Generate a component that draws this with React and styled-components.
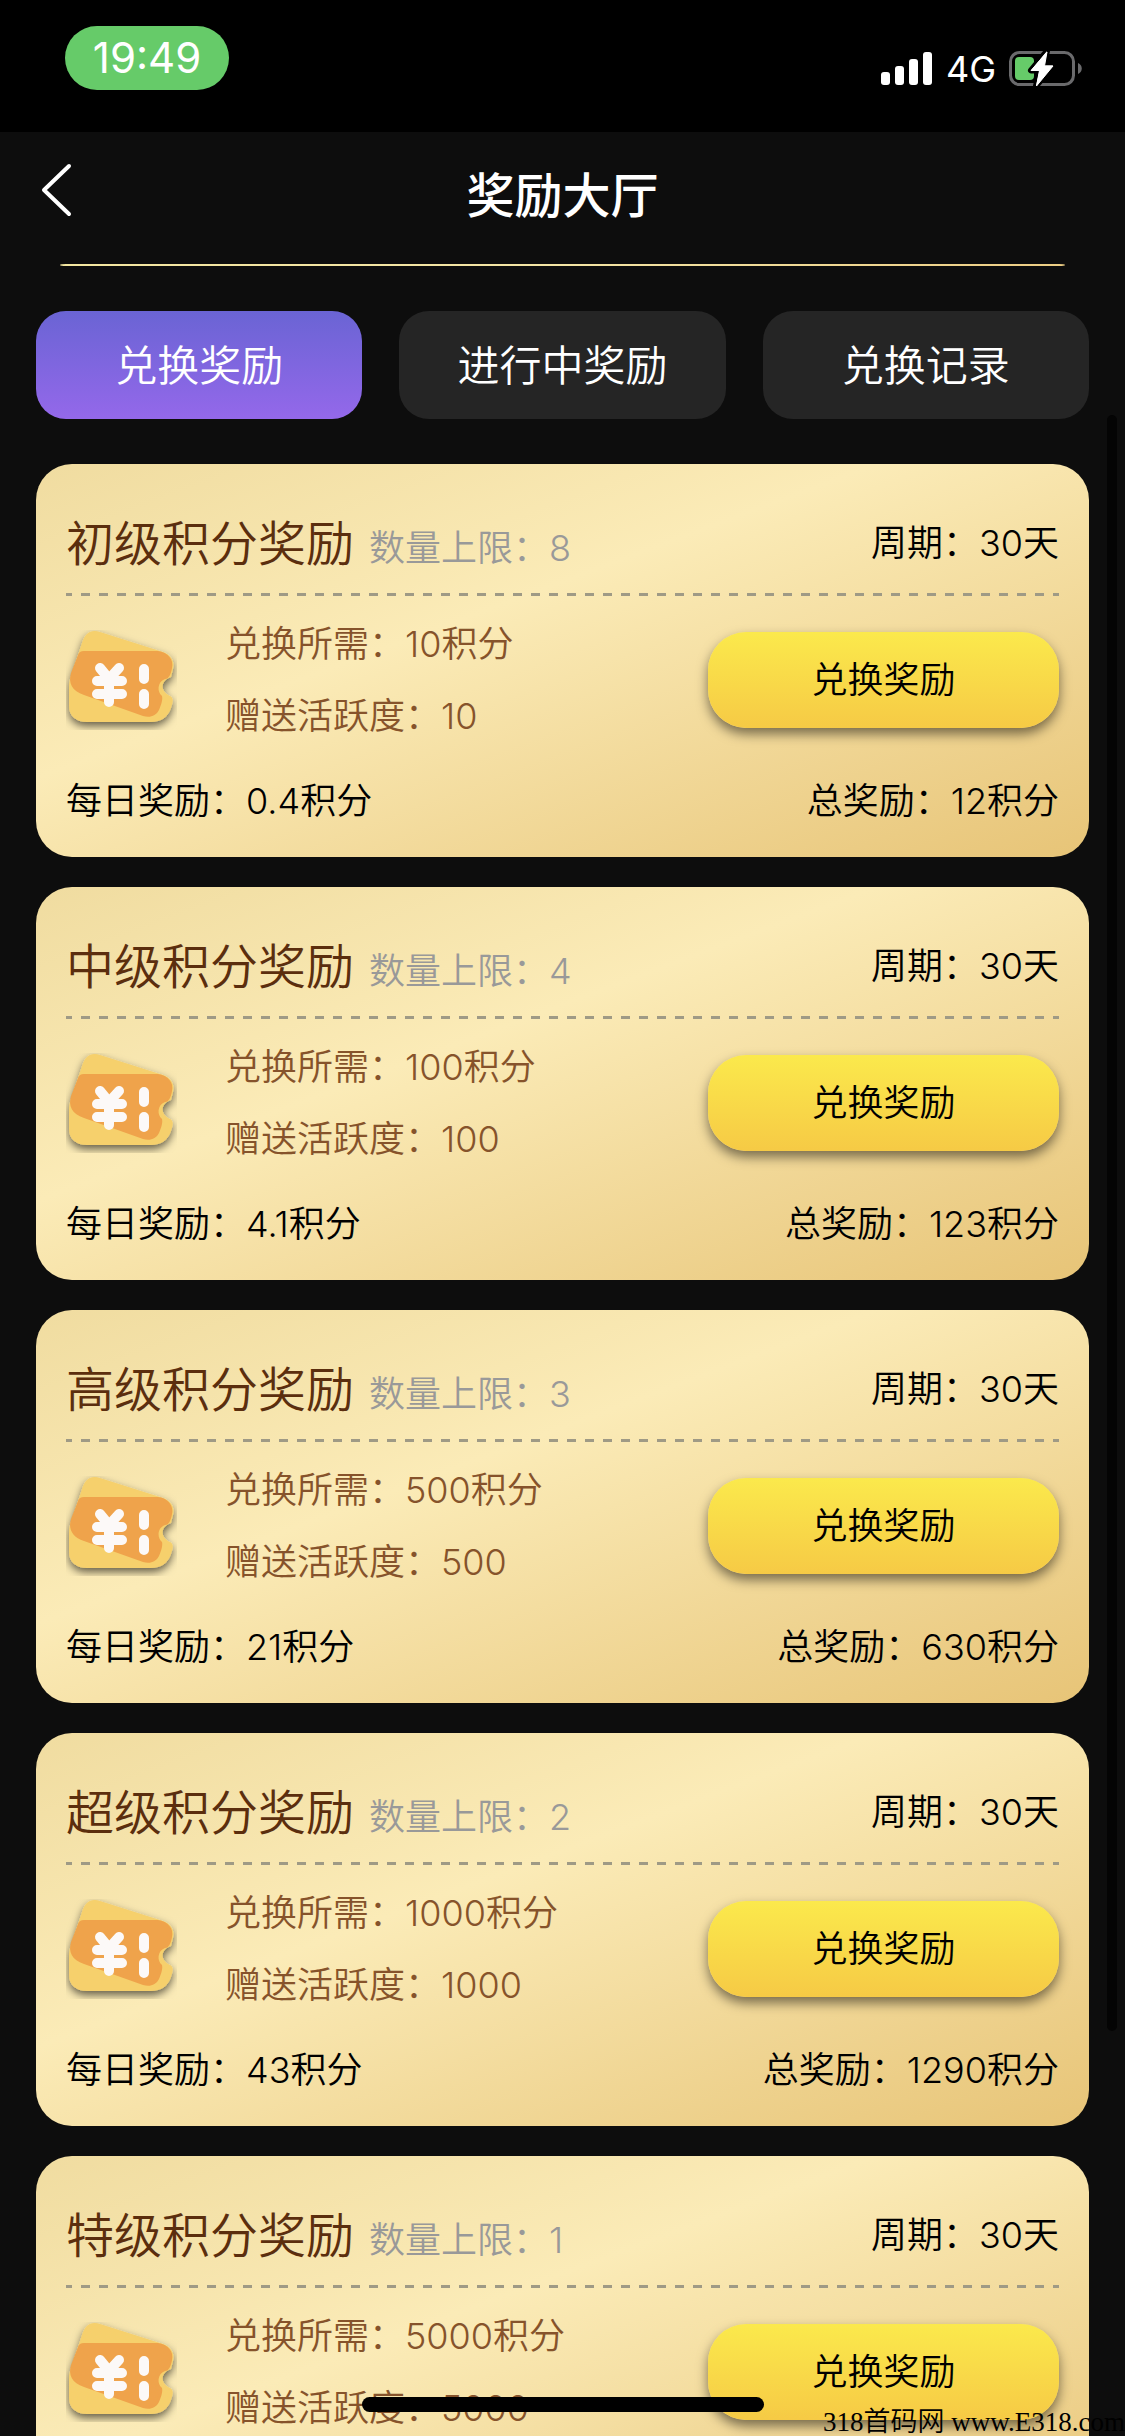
import React, { useState } from "react";
import styled, { createGlobalStyle } from "styled-components";

const GlobalStyle = createGlobalStyle`
  *, *::before, *::after { box-sizing: border-box; }
  html { height: 100%; }
  body {
    margin: 0;
    height: 100%;
    overflow: hidden;
    background: #0d0d0d;
    font-family: Inter, "Noto Sans CJK SC", sans-serif;
    font-size: 36px;
    font-weight: 350;
    color: #000;
  }
  #root { height: 100%; }
  button { font: inherit; border: 0; padding: 0; cursor: pointer; }
`;

const Screen = styled.div`
  height: 100%;
  display: flex;
  flex-direction: column;
  overflow: hidden;
  position: relative;
`;

const StatusBar = styled.div`
  flex: none;
  height: 132px;
  padding: 26px 43px 0 65px;
  display: flex;
  align-items: flex-start;
  justify-content: space-between;
  background: #000;
  color: #fff;
`;

const Clock = styled.time`
  width: 164px;
  height: 64px;
  border-radius: 32px;
  background: #66cb69;
  font-size: 42px;
  font-weight: 400;
  line-height: 64px;
  text-align: center;
`;

const StatusIcons = styled.div`
  height: 86px;
  display: flex;
  align-items: center;
  gap: 13px;
  font-size: 36px;
  font-weight: 400;
`;

const Header = styled.header`
  flex: none;
  height: 132px;
  padding: 0 36px 4px;
  display: grid;
  grid-template-columns: 1fr auto 1fr;
  align-items: center;
  color: #fff;
`;

const BackButton = styled.button`
  width: 48px;
  height: 60px;
  background: none;
  color: inherit;
  display: flex;
  align-items: center;
  margin-bottom: 12px;
`;

const Title = styled.h1`
  margin: 0;
  font-size: 48px;
  font-weight: 500;
  line-height: 72px;
`;

const GoldLine = styled.div`
  flex: none;
  height: 2px;
  margin: 0 60px;
  border-radius: 12px / 2px;
  background: linear-gradient(to right, #f3e6a0, #f3e4a4 50%, #eccd84);
`;

const Tabs = styled.nav`
  flex: none;
  display: grid;
  grid-template-columns: repeat(3, 1fr);
  gap: 37px;
  padding: 45px 36px;
`;

const Tab = styled.button`
  height: 108px;
  padding-bottom: 6px;
  border-radius: 30px;
  color: #fff;
  font-size: 42px;
  background: ${(p) =>
    p.$active ? "linear-gradient(#6a64d4, #9468ea)" : "#252525"};
`;

const List = styled.main`
  flex: 1;
  min-height: 0;
  overflow: hidden;
  display: flex;
  flex-direction: column;
  gap: 30px;
  padding: 0 36px;
`;

const Card = styled.section`
  flex: none;
  min-height: 393px;
  padding: 48px 30px 25px;
  border-radius: 36px;
  background: linear-gradient(
    to bottom right,
    #f0dca0,
    #fbebb7 40%,
    #e7c477
  );
`;

const CardHead = styled.div`
  display: flex;
  align-items: flex-start;
  justify-content: space-between;
  height: 60px;
`;

const Heading = styled.div`
  display: flex;
  align-items: baseline;
  gap: 15px;
`;

const Name = styled.h2`
  margin: 0;
  font-size: 48px;
  font-weight: 350;
  line-height: 64px;
  color: #5b2e0e;
`;

const Limit = styled.span`
  color: #999;
`;

const Period = styled.span`
  line-height: 62px;
`;

const Dashes = styled.hr`
  height: 3px;
  margin: 21px 0 0;
  border: 0;
  background: repeating-linear-gradient(
    to right,
    #9f9a85 0 6px,
    transparent 6px 15px,
    #9f9a85 15px 18px
  );
`;

const CardBody = styled.div`
  display: flex;
  align-items: center;
  height: 168px;
`;

const Terms = styled.div`
  flex: 1;
  margin-left: 48px;
  line-height: 72px;
  color: #86532b;
`;

const RedeemButton = styled.button`
  width: 351px;
  height: 96px;
  padding-bottom: 6px;
  border-radius: 38px;
  background: linear-gradient(#fbe94c, #f6ca45);
  box-shadow: 0 6px 12px rgba(0, 0, 0, 0.5);
  color: #000;
`;

const CardFoot = styled.div`
  display: flex;
  justify-content: space-between;
  padding-top: 6px;
  line-height: 62px;
`;

const ScrollThumb = styled.div`
  position: absolute;
  top: 415px;
  right: 8px;
  width: 10px;
  height: 1616px;
  border-radius: 5px;
  background: #040404;
`;

const HomeIndicator = styled.div`
  position: absolute;
  bottom: 24px;
  left: 50%;
  width: 402px;
  height: 15px;
  border-radius: 8px;
  transform: translateX(-50%);
  background: #000;
`;

const Watermark = styled.div`
  position: absolute;
  right: 0;
  bottom: 0;
  font-family: "Liberation Serif", "Noto Sans CJK SC", serif;
  font-size: 27px;
  line-height: 27px;
  white-space: nowrap;
`;

function SignalIcon() {
  return (
    <svg width="52" height="36" viewBox="0 0 52 36" fill="#fff" aria-hidden="true">
      <rect x="0" y="21" width="9" height="13" rx="3" />
      <rect x="14" y="15" width="9" height="19" rx="3" />
      <rect x="28" y="8" width="9" height="26" rx="3" />
      <rect x="42" y="1" width="9" height="33" rx="3" />
    </svg>
  );
}

function BatteryIcon() {
  return (
    <svg width="73" height="38" viewBox="0 0 73 38" aria-hidden="true">
      <rect x="1.5" y="2.5" width="63" height="32" rx="9" fill="none" stroke="#6a6a6c" strokeWidth="3" />
      <path d="M69 13c5 2 5 9 0 11z" fill="#6a6a6c" />
      <rect x="6" y="7" width="19" height="23" rx="4" fill="#66cb69" />
      <path
        d="M38 1 22 20.500h8.500L27 36l17-20.500h-9z"
        fill="#fff"
        stroke="#000"
        strokeWidth="6"
        strokeLinejoin="round"
        paintOrder="stroke"
      />
      <path d="M38 2 22 20.500h8.500L27.500 36 44 16h-8.500z" fill="#fff" stroke="#fff" strokeWidth="1" strokeLinejoin="round" />
    </svg>
  );
}

function CouponIcon() {
  return (
    <svg width="111" height="100" viewBox="0 0 111 100" aria-hidden="true">
      <defs>
        <filter id="couponShadow" x="-10%" y="-10%" width="120%" height="125%">
          <feDropShadow dx="0" dy="4" stdDeviation="4" floodColor="#000" floodOpacity="0.6" />
        </filter>
      </defs>
      <g filter="url(#couponShadow)">
        <path
          d="M16 13C19 3 25-1 34 2L97 22C105 25 109 31 107 39L105 47C94 51 94 61 104 66C108 68 107 72 105 78C102 87 95 92 85 92H21C10 92 3 86 3 76V56C3 50 6 44 8 37Z"
          fill="#f6d06c"
        />
      </g>
      <path
        d="M12 25Q13 21 18 21H92C102 22 108 30 106 38C105 44 103 49 99 49C91 52 91 62 96 66C97 70 95 75 93 80C90 86 84 88 77 86L18 65C6 61 2 53 5 43Z"
        fill="#efa34b"
      />
      <g stroke="#fcf9f8" strokeWidth="10" strokeLinecap="round" strokeLinejoin="round" fill="none">
        <path d="M34 38 43 49 53 38M43 49V72M31 51H56M31 64H56" />
        <path d="M78 39V49M78 64V74" />
      </g>
    </svg>
  );
}

const TABS = ["兑换奖励", "进行中奖励", "兑换记录"];

const REWARDS = [
  { name: "初级积分奖励", limit: 8, cost: 10, daily: "0.4", total: 12 },
  { name: "中级积分奖励", limit: 4, cost: 100, daily: "4.1", total: 123 },
  { name: "高级积分奖励", limit: 3, cost: 500, daily: "21", total: 630 },
  { name: "超级积分奖励", limit: 2, cost: 1000, daily: "43", total: 1290 },
  { name: "特级积分奖励", limit: 1, cost: 5000 },
];

function RewardCard({ reward }) {
  return (
    <Card>
      <CardHead>
        <Heading>
          <Name>{reward.name}</Name>
          <Limit>数量上限：{reward.limit}</Limit>
        </Heading>
        <Period>周期：30天</Period>
      </CardHead>
      <Dashes />
      <CardBody>
        <CouponIcon />
        <Terms>
          <div>兑换所需：{reward.cost}积分</div>
          <div>赠送活跃度：{reward.cost}</div>
        </Terms>
        <RedeemButton type="button">兑换奖励</RedeemButton>
      </CardBody>
      {reward.daily && (
        <CardFoot>
          <span>每日奖励：{reward.daily}积分</span>
          <span>总奖励：{reward.total}积分</span>
        </CardFoot>
      )}
    </Card>
  );
}

export default function App() {
  const [active, setActive] = useState(0);
  return (
    <Screen>
      <GlobalStyle />
      <StatusBar>
        <Clock>19:49</Clock>
        <StatusIcons>
          <SignalIcon />
          <span>4G</span>
          <BatteryIcon />
        </StatusIcons>
      </StatusBar>
      <Header>
        <BackButton type="button" aria-label="返回">
          <svg width="42" height="56" viewBox="0 0 42 56" fill="none" stroke="#fff" strokeWidth="4" strokeLinecap="round" strokeLinejoin="round" aria-hidden="true">
            <path d="M33 4 8 28 33 52" />
          </svg>
        </BackButton>
        <Title>奖励大厅</Title>
      </Header>
      <GoldLine />
      <Tabs>
        {TABS.map((label, i) => (
          <Tab key={label} type="button" $active={i === active} onClick={() => setActive(i)}>
            {label}
          </Tab>
        ))}
      </Tabs>
      <List>
        {REWARDS.map((reward) => (
          <RewardCard key={reward.name} reward={reward} />
        ))}
      </List>
      <ScrollThumb />
      <HomeIndicator />
      <Watermark>318首码网 www.E318.com</Watermark>
    </Screen>
  );
}
